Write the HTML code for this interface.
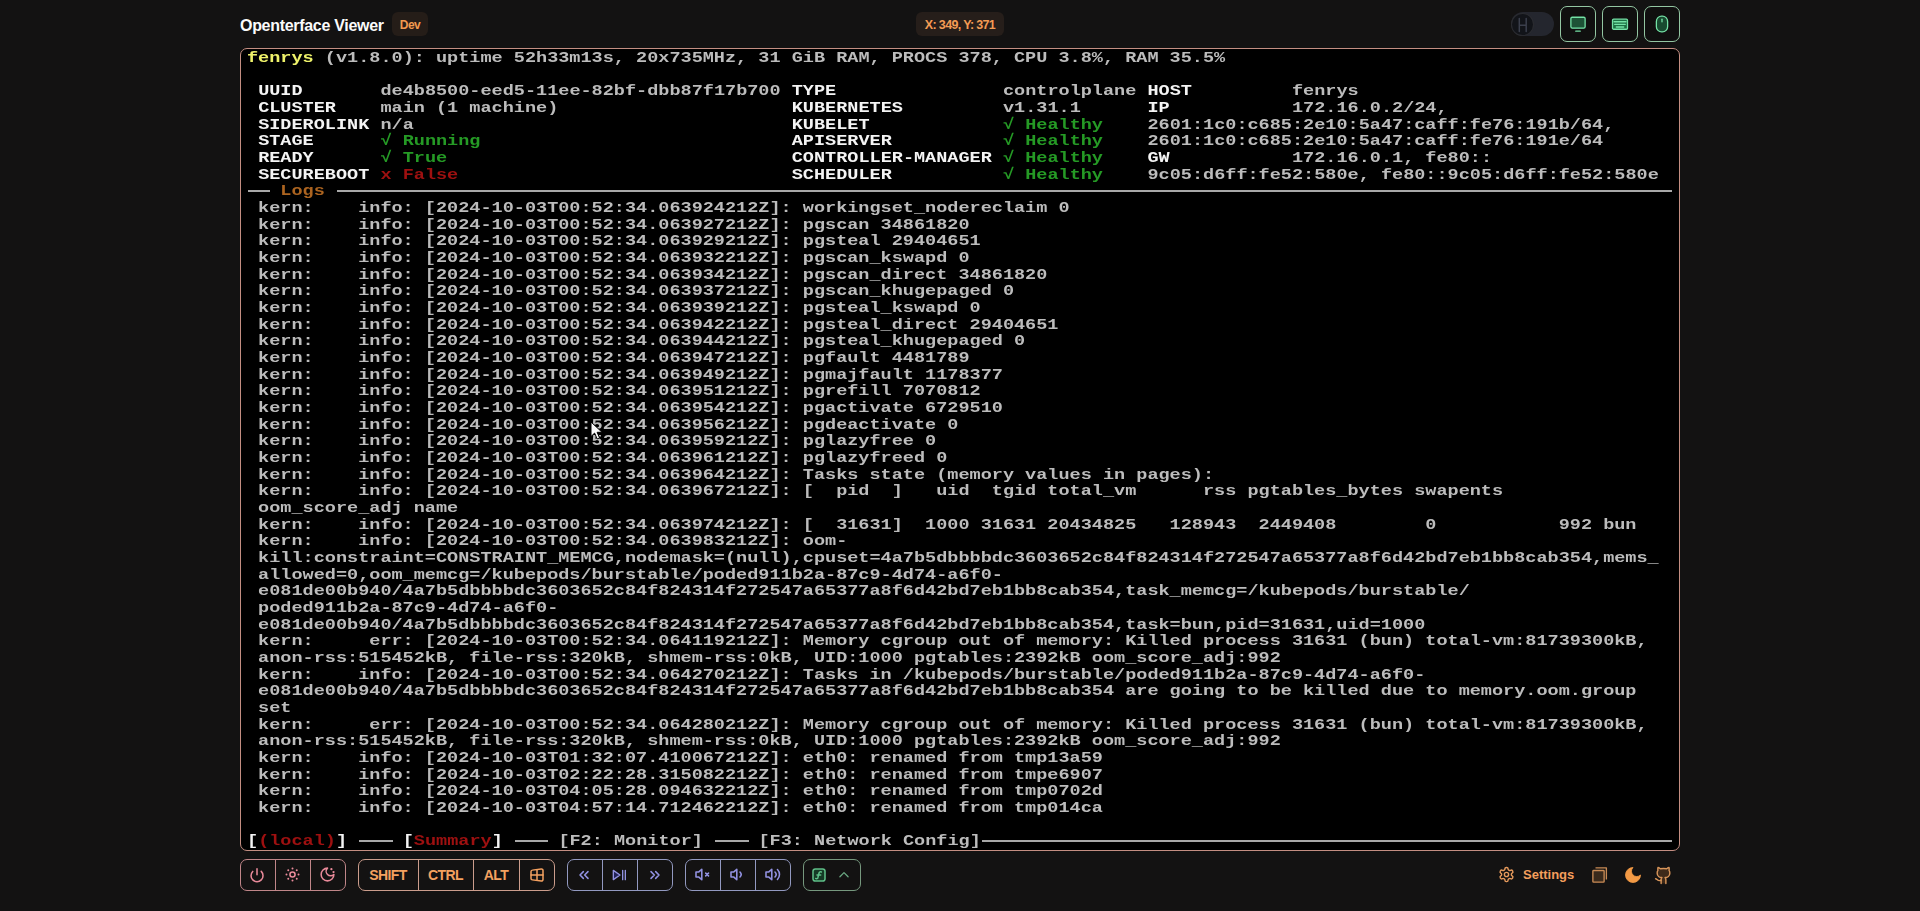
<!DOCTYPE html>
<html><head><meta charset="utf-8">
<style>
*{box-sizing:border-box;margin:0;padding:0}
html,body{width:1920px;height:911px;overflow:hidden;background:#131212;font-family:"Liberation Sans",sans-serif}
.abs{position:absolute}
.title{position:absolute;left:240px;top:14.7px;font-weight:bold;font-size:16px;letter-spacing:-0.3px;color:#fbfbfb;line-height:22px}
.dev{position:absolute;left:392px;top:12px;width:36px;height:24px;border-radius:6px;background:#251d18;color:#f19a4f;font-weight:bold;font-size:12px;letter-spacing:-0.5px;line-height:27px;text-align:center}
.coord{position:absolute;left:916px;top:12px;width:88px;height:24px;border-radius:6px;background:#261e1a;color:#f39b54;font-weight:bold;font-size:12.5px;letter-spacing:-0.65px;line-height:27px;text-align:center}
.tog{position:absolute;left:1510.5px;top:12px;width:43.5px;height:24px;border-radius:12px;background:#24262e}
.knob{position:absolute;left:1.5px;top:1.5px;width:21px;height:21px;border-radius:50%;background:#121419;box-shadow:0 0 0 1px #2a2b30}
.tbtn{position:absolute;top:6px;width:36px;height:36px;border:1.4px solid #93c6a2;border-radius:7px;background:#100f0f}
.tbtn svg{position:absolute;left:7.6px;top:7.6px}
.video{position:absolute;left:240px;top:48px;width:1440px;height:803px;border:1.5px solid #c48e82;border-radius:7px;background:#000;overflow:hidden}
.term{position:absolute;left:247.0px;top:50.1px;width:1430px;height:800px;filter:blur(0.3px)}
.tr{position:absolute;left:0;white-space:pre;font-family:"Liberation Mono",monospace;font-weight:bold;font-size:15.2px;line-height:16.6667px;height:16.6667px;transform:scaleX(1.21965);transform-origin:0 0;color:#bcbcbc}
.g{color:#bcbcbc}.w{color:#f4f4f4}.y{color:#eef26a}.gr{color:#259a25}.rd{color:#9e1010}.br{color:#ac6420}
.ln{position:absolute;height:1.8px;background:#a8a8a8}
.grp{position:absolute;top:859px;height:32px;border:1.5px solid;border-radius:7px}
.dv{position:absolute;top:0;bottom:0;width:1.2px}
.ic{position:absolute}
.kt{font-weight:bold;font-size:13px;color:#f4a160}
</style></head><body>
<div class="title">Openterface Viewer</div>
<div class="dev">Dev</div>
<div class="coord">X: 349, Y: 371</div>
<div class="tog"><div class="knob"><svg width="21" height="22" viewBox="0 0 21 22" fill="none" stroke="#3b3f4c" stroke-width="1.5" stroke-linecap="round"><path d="M7.3 4.5v13M14.2 4.5v13M7.3 11.3h6.9"/></svg></div></div>
<div class="tbtn" style="left:1560px"><svg width="18" height="18" viewBox="0 0 24 24" fill="#1d5236" stroke="#74e2a6" stroke-width="1.7" stroke-linecap="round" stroke-linejoin="round"><rect x="2.5" y="3" width="19" height="14.5" rx="1.8"/><path d="M9 21.5h6" fill="none"/></svg></div>
<div class="tbtn" style="left:1602px"><svg width="18" height="18" viewBox="0 0 24 24" fill="#1c7043" stroke="#74e2a6" stroke-width="1.7" stroke-linecap="round" stroke-linejoin="round"><rect x="2" y="5.5" width="20" height="13.5" rx="1.5"/><path d="M4 9h16M5 12.5h14M7 16h10" fill="none"/></svg></div>
<div class="tbtn" style="left:1644px"><svg width="18" height="18" viewBox="0 0 24 24" fill="#184a30" stroke="#74e2a6" stroke-width="1.7" stroke-linecap="round" stroke-linejoin="round"><rect x="4.5" y="1.5" width="15" height="21" rx="7"/><path d="M12 5.5v3.5" fill="none"/></svg></div>

<div class="video"></div>
<div class="term">
<div class="tr" style="top:0.00px"><span class="y">fenrys</span><span class="g"> (v1.8.0): uptime 52h33m13s, 20x735MHz, 31 GiB RAM, PROCS 378, CPU 3.8%, RAM 35.5%</span></div>
<div class="tr" style="top:33.33px"><span class="g"> </span><span class="w">UUID       </span><span class="g">de4b8500-eed5-11ee-82bf-dbb87f17b700</span><span class="g"> </span><span class="w">TYPE               </span><span class="g">controlplane</span><span class="g"> </span><span class="w">HOST         </span><span class="g">fenrys</span></div>
<div class="tr" style="top:50.00px"><span class="g"> </span><span class="w">CLUSTER    </span><span class="g">main (1 machine)</span><span class="g">                     </span><span class="w">KUBERNETES         </span><span class="g">v1.31.1</span><span class="g">      </span><span class="w">IP           </span><span class="g">172.16.0.2/24,</span></div>
<div class="tr" style="top:66.67px"><span class="g"> </span><span class="w">SIDEROLINK </span><span class="g">n/a</span><span class="g">                                  </span><span class="w">KUBELET            </span><span class="gr">√ Healthy</span><span class="g">    </span><span class="g">2601:1c0:c685:2e10:5a47:caff:fe76:191b/64,</span></div>
<div class="tr" style="top:83.33px"><span class="g"> </span><span class="w">STAGE      </span><span class="gr">√ Running</span><span class="g">                            </span><span class="w">APISERVER          </span><span class="gr">√ Healthy</span><span class="g">    </span><span class="g">2601:1c0:c685:2e10:5a47:caff:fe76:191e/64</span></div>
<div class="tr" style="top:100.00px"><span class="g"> </span><span class="w">READY      </span><span class="gr">√ True</span><span class="g">                               </span><span class="w">CONTROLLER-MANAGER </span><span class="gr">√ Healthy</span><span class="g">    </span><span class="w">GW           </span><span class="g">172.16.0.1, fe80::</span></div>
<div class="tr" style="top:116.67px"><span class="g"> </span><span class="w">SECUREBOOT </span><span class="rd">x False</span><span class="g">                              </span><span class="w">SCHEDULER          </span><span class="gr">√ Healthy</span><span class="g">    </span><span class="g">9c05:d6ff:fe52:580e, fe80::9c05:d6ff:fe52:580e</span></div>
<div class="tr" style="top:150.00px"><span class="g"> kern:    info: [2024-10-03T00:52:34.063924212Z]: workingset_nodereclaim 0</span></div>
<div class="tr" style="top:166.67px"><span class="g"> kern:    info: [2024-10-03T00:52:34.063927212Z]: pgscan 34861820</span></div>
<div class="tr" style="top:183.33px"><span class="g"> kern:    info: [2024-10-03T00:52:34.063929212Z]: pgsteal 29404651</span></div>
<div class="tr" style="top:200.00px"><span class="g"> kern:    info: [2024-10-03T00:52:34.063932212Z]: pgscan_kswapd 0</span></div>
<div class="tr" style="top:216.67px"><span class="g"> kern:    info: [2024-10-03T00:52:34.063934212Z]: pgscan_direct 34861820</span></div>
<div class="tr" style="top:233.33px"><span class="g"> kern:    info: [2024-10-03T00:52:34.063937212Z]: pgscan_khugepaged 0</span></div>
<div class="tr" style="top:250.00px"><span class="g"> kern:    info: [2024-10-03T00:52:34.063939212Z]: pgsteal_kswapd 0</span></div>
<div class="tr" style="top:266.67px"><span class="g"> kern:    info: [2024-10-03T00:52:34.063942212Z]: pgsteal_direct 29404651</span></div>
<div class="tr" style="top:283.33px"><span class="g"> kern:    info: [2024-10-03T00:52:34.063944212Z]: pgsteal_khugepaged 0</span></div>
<div class="tr" style="top:300.00px"><span class="g"> kern:    info: [2024-10-03T00:52:34.063947212Z]: pgfault 4481789</span></div>
<div class="tr" style="top:316.67px"><span class="g"> kern:    info: [2024-10-03T00:52:34.063949212Z]: pgmajfault 1178377</span></div>
<div class="tr" style="top:333.33px"><span class="g"> kern:    info: [2024-10-03T00:52:34.063951212Z]: pgrefill 7070812</span></div>
<div class="tr" style="top:350.00px"><span class="g"> kern:    info: [2024-10-03T00:52:34.063954212Z]: pgactivate 6729510</span></div>
<div class="tr" style="top:366.67px"><span class="g"> kern:    info: [2024-10-03T00:52:34.063956212Z]: pgdeactivate 0</span></div>
<div class="tr" style="top:383.33px"><span class="g"> kern:    info: [2024-10-03T00:52:34.063959212Z]: pglazyfree 0</span></div>
<div class="tr" style="top:400.00px"><span class="g"> kern:    info: [2024-10-03T00:52:34.063961212Z]: pglazyfreed 0</span></div>
<div class="tr" style="top:416.67px"><span class="g"> kern:    info: [2024-10-03T00:52:34.063964212Z]: Tasks state (memory values in pages):</span></div>
<div class="tr" style="top:433.33px"><span class="g"> kern:    info: [2024-10-03T00:52:34.063967212Z]: [  pid  ]   uid  tgid total_vm      rss pgtables_bytes swapents</span></div>
<div class="tr" style="top:450.00px"><span class="g"> oom_score_adj name</span></div>
<div class="tr" style="top:466.67px"><span class="g"> kern:    info: [2024-10-03T00:52:34.063974212Z]: [  31631]  1000 31631 20434825   128943  2449408        0           992 bun</span></div>
<div class="tr" style="top:483.33px"><span class="g"> kern:    info: [2024-10-03T00:52:34.063983212Z]: oom-</span></div>
<div class="tr" style="top:500.00px"><span class="g"> kill:constraint=CONSTRAINT_MEMCG,nodemask=(null),cpuset=4a7b5dbbbbdc3603652c84f824314f272547a65377a8f6d42bd7eb1bb8cab354,mems_</span></div>
<div class="tr" style="top:516.67px"><span class="g"> allowed=0,oom_memcg=/kubepods/burstable/poded911b2a-87c9-4d74-a6f0-</span></div>
<div class="tr" style="top:533.33px"><span class="g"> e081de00b940/4a7b5dbbbbdc3603652c84f824314f272547a65377a8f6d42bd7eb1bb8cab354,task_memcg=/kubepods/burstable/</span></div>
<div class="tr" style="top:550.00px"><span class="g"> poded911b2a-87c9-4d74-a6f0-</span></div>
<div class="tr" style="top:566.67px"><span class="g"> e081de00b940/4a7b5dbbbbdc3603652c84f824314f272547a65377a8f6d42bd7eb1bb8cab354,task=bun,pid=31631,uid=1000</span></div>
<div class="tr" style="top:583.33px"><span class="g"> kern:     err: [2024-10-03T00:52:34.064119212Z]: Memory cgroup out of memory: Killed process 31631 (bun) total-vm:81739300kB,</span></div>
<div class="tr" style="top:600.00px"><span class="g"> anon-rss:515452kB, file-rss:320kB, shmem-rss:0kB, UID:1000 pgtables:2392kB oom_score_adj:992</span></div>
<div class="tr" style="top:616.67px"><span class="g"> kern:    info: [2024-10-03T00:52:34.064270212Z]: Tasks in /kubepods/burstable/poded911b2a-87c9-4d74-a6f0-</span></div>
<div class="tr" style="top:633.33px"><span class="g"> e081de00b940/4a7b5dbbbbdc3603652c84f824314f272547a65377a8f6d42bd7eb1bb8cab354 are going to be killed due to memory.oom.group</span></div>
<div class="tr" style="top:650.00px"><span class="g"> set</span></div>
<div class="tr" style="top:666.67px"><span class="g"> kern:     err: [2024-10-03T00:52:34.064280212Z]: Memory cgroup out of memory: Killed process 31631 (bun) total-vm:81739300kB,</span></div>
<div class="tr" style="top:683.33px"><span class="g"> anon-rss:515452kB, file-rss:320kB, shmem-rss:0kB, UID:1000 pgtables:2392kB oom_score_adj:992</span></div>
<div class="tr" style="top:700.00px"><span class="g"> kern:    info: [2024-10-03T01:32:07.410067212Z]: eth0: renamed from tmp13a59</span></div>
<div class="tr" style="top:716.67px"><span class="g"> kern:    info: [2024-10-03T02:22:28.315082212Z]: eth0: renamed from tmpe6907</span></div>
<div class="tr" style="top:733.33px"><span class="g"> kern:    info: [2024-10-03T04:05:28.094632212Z]: eth0: renamed from tmp0702d</span></div>
<div class="tr" style="top:750.00px"><span class="g"> kern:    info: [2024-10-03T04:57:14.712462212Z]: eth0: renamed from tmp014ca</span></div>
<div class="tr" style="top:783.33px"><span class="w">[</span><span class="rd">(local)</span><span class="w">]</span><span class="g"> </span><span class="g">   </span><span class="g"> </span><span class="w">[</span><span class="rd">Summary</span><span class="w">]</span><span class="g"> </span><span class="g">   </span><span class="g"> [F2: Monitor] </span><span class="g">   </span><span class="g"> [F3: Network Config]</span></div>
<div class="tr" style="top:133.33px"><span>   </span><span class="br">Logs</span></div>
<div class="ln" style="left:0.50px;top:140.13px;width:22.85px"></div>
<div class="ln" style="left:89.50px;top:140.13px;width:1335.60px"></div>
<div class="ln" style="left:111.75px;top:790.13px;width:33.98px"></div>
<div class="ln" style="left:267.50px;top:790.13px;width:33.98px"></div>
<div class="ln" style="left:467.75px;top:790.13px;width:33.98px"></div>
<div class="ln" style="left:734.75px;top:790.13px;width:690.35px"></div>
</div>

<svg class="abs" style="left:590px;top:421px" width="13" height="19" viewBox="0 0 13 19"><path d="M1 1v14.5l3.6-3.4 2.6 5.8 2.4-1-2.5-5.6h5z" fill="#fafafa" stroke="#000" stroke-width="1" stroke-linejoin="round"/></svg>
<!-- toolbar -->
<div class="grp" style="left:240px;width:106.00px;border-color:#c08689;background:#131212">
<div class="dv" style="left:33.80px;background:#c08689"></div>
<div class="dv" style="left:68.80px;background:#c08689"></div>
<div class="ic" style="left:8.40px;top:6.50px;width:16px;height:16px"><svg width="16" height="16" viewBox="0 0 24 24" fill="none" stroke="#e98a9a" stroke-width="2.3" stroke-linecap="round" stroke-linejoin="round" ><path d="M12 2.5v9"/><path d="M18.4 6.6a9 9 0 1 1-12.77.04"/></svg></div>
<div class="ic" style="left:42.90px;top:6.00px;width:17px;height:17px"><svg width="17" height="17" viewBox="0 0 24 24" fill="none" stroke="#e98a9a" stroke-width="2.2" stroke-linecap="round" stroke-linejoin="round" ><circle cx="12" cy="12" r="3.6"/><path d="M12 3.5h.01M20.5 12h.01M12 20.5h.01M3.5 12h.01M18 6h.01M18 18h.01M6 18h.01M6 6h.01" stroke-width="2.8"/></svg></div>
<div class="ic" style="left:77.90px;top:6.00px;width:17px;height:17px"><svg width="17" height="17" viewBox="0 0 24 24" fill="none" stroke="#e98a9a" stroke-width="2.2" stroke-linecap="round" stroke-linejoin="round" ><path d="M12 3a6 6 0 0 0 9 9 9 9 0 1 1-9-9Z"/><path d="M17.5 4.5h.01M20.5 8.5h.01" stroke-width="3.2"/></svg></div>
</div>
<div class="grp" style="left:358px;width:196.50px;border-color:#cb9d8c;background:#131212">
<div class="dv" style="left:58.90px;background:#cb9d8c"></div>
<div class="dv" style="left:113.90px;background:#cb9d8c"></div>
<div class="dv" style="left:159.80px;background:#cb9d8c"></div>
<div class="ic" style="left:-1.00px;top:4.50px;width:60px;height:20px"><div class="kt" style="width:60px;height:20px;line-height:21px;text-align:center;font-size:14px;letter-spacing:-0.6px">SHIFT</div></div>
<div class="ic" style="left:61.50px;top:4.50px;width:50px;height:20px"><div class="kt" style="width:50px;height:20px;line-height:21px;text-align:center;font-size:14px;letter-spacing:-0.6px">CTRL</div></div>
<div class="ic" style="left:117.00px;top:4.50px;width:40px;height:20px"><div class="kt" style="width:40px;height:20px;line-height:21px;text-align:center;font-size:14px;letter-spacing:-0.6px">ALT</div></div>
<div class="ic" style="left:168.50px;top:5.50px;width:18px;height:18px"><svg width="18" height="18" viewBox="0 0 24 24" fill="none" stroke="#f4a160" stroke-width="2" stroke-linecap="round" stroke-linejoin="round" ><path d="M17.8 20l-12-1.5c-1-.1-1.8-.9-1.8-1.9v-9.2c0-1 .8-1.8 1.8-1.9l12-1.5c1.2-.1 2.2.8 2.2 1.9v12.1c0 1.2-1.1 2.1-2.2 1.9z"/><path d="M12 5v14M4 12h16"/></svg></div>
</div>
<div class="grp" style="left:567px;width:106.00px;border-color:#9299c0;background:#131212">
<div class="dv" style="left:33.90px;background:#9299c0"></div>
<div class="dv" style="left:68.90px;background:#9299c0"></div>
<div class="ic" style="left:8.20px;top:6.50px;width:16px;height:16px"><svg width="16" height="16" viewBox="0 0 24 24" fill="none" stroke="#9292e2" stroke-width="2.3" stroke-linecap="round" stroke-linejoin="round" ><path d="M11 17l-5-5 5-5M18 17l-5-5 5-5"/></svg></div>
<div class="ic" style="left:43.30px;top:6.50px;width:16px;height:16px"><svg width="16" height="16" viewBox="0 0 24 24" fill="none" stroke="#9292e2" stroke-width="2" stroke-linecap="round" stroke-linejoin="round" ><path d="M3.5 5l10 7-10 7z" fill="#23235a"/><path d="M17.5 5v14M21.5 5v14"/></svg></div>
<div class="ic" style="left:78.70px;top:6.50px;width:16px;height:16px"><svg width="16" height="16" viewBox="0 0 24 24" fill="none" stroke="#9292e2" stroke-width="2.3" stroke-linecap="round" stroke-linejoin="round" ><path d="M6 17l5-5-5-5M13 17l5-5-5-5"/></svg></div>
</div>
<div class="grp" style="left:685px;width:106.00px;border-color:#9299c0;background:#131212">
<div class="dv" style="left:34.00px;background:#9299c0"></div>
<div class="dv" style="left:68.90px;background:#9299c0"></div>
<div class="ic" style="left:7.80px;top:6.00px;width:17px;height:17px"><svg width="17" height="17" viewBox="0 0 24 24" fill="none" stroke="#9292e2" stroke-width="2.2" stroke-linecap="round" stroke-linejoin="round" ><path d="M11 4.7L6.4 8.6H2.8v6.8h3.6L11 19.3z"/><path d="M16.5 10l4 4M20.5 10l-4 4"/></svg></div>
<div class="ic" style="left:42.50px;top:6.00px;width:17px;height:17px"><svg width="17" height="17" viewBox="0 0 24 24" fill="none" stroke="#9292e2" stroke-width="2.2" stroke-linecap="round" stroke-linejoin="round" ><path d="M11 4.7L6.4 8.6H2.8v6.8h3.6L11 19.3z"/><path d="M15.5 8.5a5 5 0 0 1 0 7"/></svg></div>
<div class="ic" style="left:77.80px;top:6.00px;width:17px;height:17px"><svg width="17" height="17" viewBox="0 0 24 24" fill="none" stroke="#9292e2" stroke-width="2.2" stroke-linecap="round" stroke-linejoin="round" ><path d="M11 4.7L6.4 8.6H2.8v6.8h3.6L11 19.3z"/><path d="M15.5 8.5a5 5 0 0 1 0 7M19 5a10 10 0 0 1 0 14"/></svg></div>
</div>
<div class="grp" style="left:803.3px;width:57.90px;border-color:#76987e;background:#131212">
<div class="ic" style="left:6.30px;top:6.50px;width:16px;height:16px"><svg width="16" height="16" viewBox="0 0 24 24" fill="none" stroke="#5fbf88" stroke-width="2.3" stroke-linecap="round" stroke-linejoin="round" ><rect x="3" y="3" width="18" height="18" rx="3.5" fill="#163a26"/><path d="M15.5 7.5a2.2 2.2 0 0 0-3.3 1.2L10.3 16a2.2 2.2 0 0 1-3.3 1.2M9 12h5.5"/></svg></div>
<div class="ic" style="left:33.10px;top:7.50px;width:14px;height:14px"><svg width="14" height="14" viewBox="0 0 24 24" fill="none" stroke="#6aa882" stroke-width="2.2" stroke-linecap="round" stroke-linejoin="round" ><path d="M5 15l7-7 7 7"/></svg></div>
</div>
<div class="abs" style="left:1498px;top:866px"><svg width="17" height="17" viewBox="0 0 24 24" fill="none" stroke="#e69a5c" stroke-width="2" stroke-linecap="round" stroke-linejoin="round"><path d="M12.22 2h-.44a2 2 0 0 0-2 2v.18a2 2 0 0 1-1 1.73l-.43.25a2 2 0 0 1-2 0l-.15-.08a2 2 0 0 0-2.73.73l-.22.38a2 2 0 0 0 .73 2.73l.15.1a2 2 0 0 1 1 1.72v.51a2 2 0 0 1-1 1.74l-.15.09a2 2 0 0 0-.73 2.73l.22.38a2 2 0 0 0 2.73.73l.15-.08a2 2 0 0 1 2 0l.43.25a2 2 0 0 1 1 1.73V20a2 2 0 0 0 2 2h.44a2 2 0 0 0 2-2v-.18a2 2 0 0 1 1-1.73l.43-.25a2 2 0 0 1 2 0l.15.08a2 2 0 0 0 2.73-.73l.22-.39a2 2 0 0 0-.73-2.73l-.15-.08a2 2 0 0 1-1-1.74v-.5a2 2 0 0 1 1-1.74l.15-.09a2 2 0 0 0 .73-2.73l-.22-.38a2 2 0 0 0-2.73-.73l-.15.08a2 2 0 0 1-2 0l-.43-.25a2 2 0 0 1-1-1.73V4a2 2 0 0 0-2-2z"/><circle cx="12" cy="12" r="3"/></svg></div>
<div class="abs kt" style="left:1523px;top:866px;line-height:18px;color:#f49e5c">Settings</div>
<div class="abs" style="left:1591px;top:866px"><svg width="18" height="18" viewBox="0 0 24 24" fill="none" stroke="#c98b55" stroke-width="1.8" stroke-linejoin="round"><rect x="2.5" y="6" width="15" height="15.5" rx="1" fill="#3a2a1c"/><path d="M6 2.5h14.5v15.5"/></svg></div>
<div class="abs" style="left:1622.5px;top:864.5px"><svg width="20" height="20" viewBox="0 0 24 24"><path d="M12 3a6 6 0 0 0 9 9 9 9 0 1 1-9-9Z" fill="#f39a45" stroke="#f39a45" stroke-width="1" stroke-linejoin="round"/></svg></div>
<div class="abs" style="left:1653.5px;top:865.5px"><svg width="19" height="19" viewBox="0 0 24 24" fill="none" stroke="#d8955a" stroke-width="1.8" stroke-linecap="round" stroke-linejoin="round"><path d="M15 22v-4a4.8 4.8 0 0 0-1-3.5c3 0 6-2 6-5.5.08-1.25-.27-2.48-1-3.5.28-1.15.28-2.35 0-3.5 0 0-1 0-3 1.5-2.64-.5-5.36-.5-8 0C6 2 5 2 5 2c-.3 1.15-.3 2.35 0 3.5A5.403 5.403 0 0 0 4 9c0 3.5 3 5.5 6 5.5-.39.49-.68 1.05-.85 1.65-.17.6-.22 1.23-.15 1.85v4" fill="#3e2a1a"/><path d="M9 18c-4.51 2-5-2-7-2"/></svg></div>
</body></html>
